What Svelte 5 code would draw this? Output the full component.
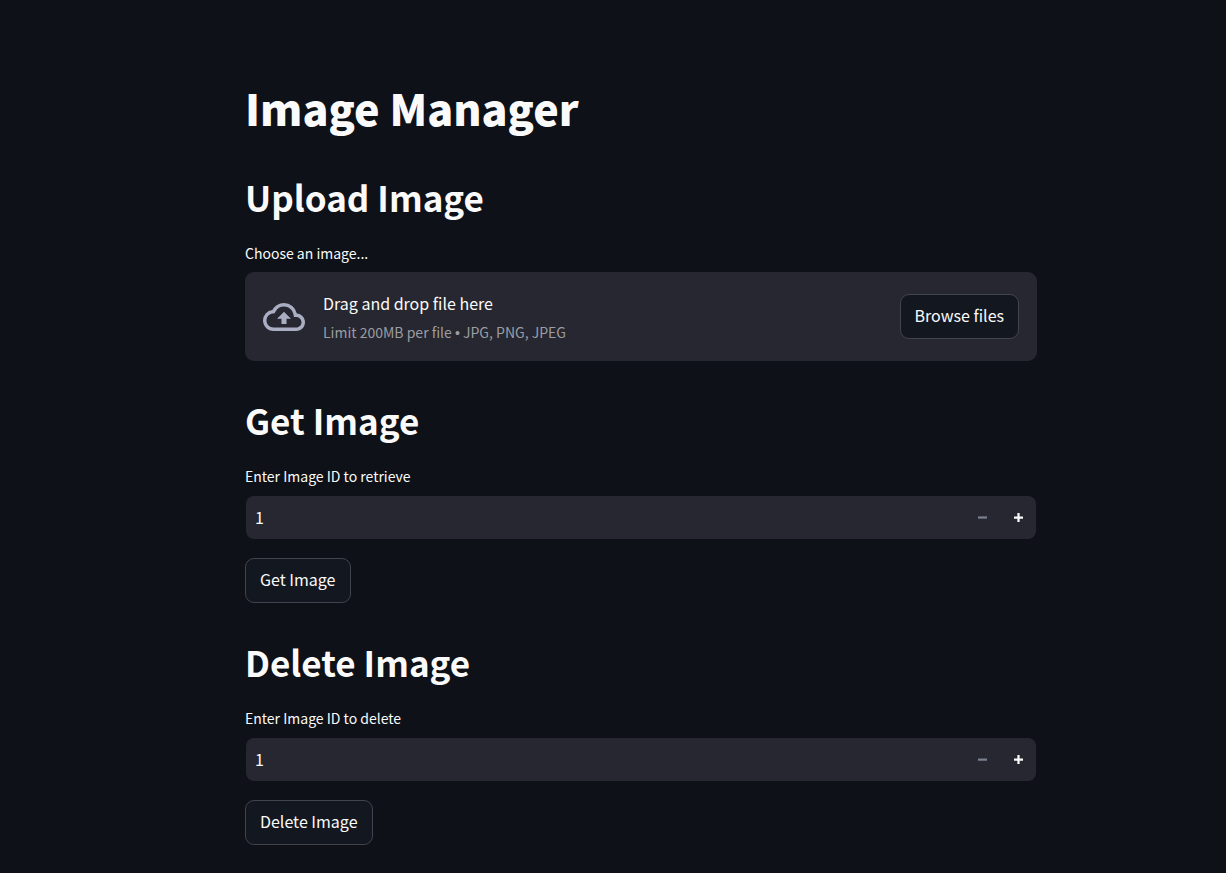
<script>
  let retrieveId = $state(1);
  let deleteId = $state(1);
  let picker;
</script>

{#snippet stepIcons(plus)}
  <svg viewBox="0 0 8 8" aria-hidden="true">
    {#if plus}
      <path d="M3 0v3h-3v2h3v3h2v-3h3v-2h-3v-3h-2z" />
    {:else}
      <path d="M0 3v2h8v-2h-8z" />
    {/if}
  </svg>
{/snippet}

<main>
  <h1>Image Manager</h1>

  <section>
    <h2>Upload Image</h2>
    <label class="caption" for="upload">Choose an image...</label>
    <div class="dropzone">
      <svg class="cloud" viewBox="0 0 24 24" aria-hidden="true">
        <path d="M19.35 10.04A7.49 7.49 0 0012 4C9.11 4 6.6 5.64 5.35 8.04A5.994 5.994 0 000 14c0 3.31 2.69 6 6 6h13c2.76 0 5-2.24 5-5 0-2.64-2.05-4.78-4.65-4.96zM19 18H6c-2.21 0-4-1.79-4-4 0-2.05 1.53-3.76 3.56-3.97l1.07-.11.5-.95A5.469 5.469 0 0112 6c2.62 0 4.88 1.86 5.39 4.43l.3 1.5 1.53.11A2.98 2.98 0 0122 15c0 1.65-1.35 3-3 3zM8 13h2.55v3h2.9v-3H16l-4-4z" />
      </svg>
      <div class="hint">
        <span>Drag and drop file here</span>
        <small>Limit 200MB per file <span class="dot">•</span> JPG, PNG, JPEG</small>
      </div>
      <input id="upload" type="file" accept=".jpg,.png,.jpeg" hidden bind:this={picker} />
      <button class="action" type="button" onclick={() => picker.click()}>Browse files</button>
    </div>
  </section>

  <section>
    <h2>Get Image</h2>
    <label class="caption" for="retrieve">Enter Image ID to retrieve</label>
    <div class="number">
      <input id="retrieve" type="number" min="1" bind:value={retrieveId} />
      <button type="button" aria-label="Decrease" disabled={retrieveId <= 1} onclick={() => retrieveId--}>{@render stepIcons(false)}</button>
      <button type="button" aria-label="Increase" onclick={() => retrieveId++}>{@render stepIcons(true)}</button>
    </div>
    <button class="action" type="button">Get Image</button>
  </section>

  <section>
    <h2>Delete Image</h2>
    <label class="caption" for="delete">Enter Image ID to delete</label>
    <div class="number">
      <input id="delete" type="number" min="1" bind:value={deleteId} />
      <button type="button" aria-label="Decrease" disabled={deleteId <= 1} onclick={() => deleteId--}>{@render stepIcons(false)}</button>
      <button type="button" aria-label="Increase" onclick={() => deleteId++}>{@render stepIcons(true)}</button>
    </div>
    <button class="action" type="button">Delete Image</button>
  </section>
</main>

<style>
  :global(body) {
    background: #0e1117;
    color: #fafafa;
    padding-left: 56px;
    font-family: "Noto Sans CJK SC", "Noto Sans", sans-serif;
    font-size: 16px;
    line-height: 28px;
  }
  main {
    max-width: 792px;
    margin: 0 auto;
    padding: 78px 0 28px;
  }
  h1 {
    margin: 0;
    font-size: 43px;
    line-height: 58px;
    font-weight: 900;
  }
  section {
    padding-top: 35px;
  }
  h1 + section {
    padding-top: 37px;
  }
  h2 {
    margin: 0 0 20px;
    font-size: 35px;
    line-height: 48px;
    font-weight: 700;
  }
  .caption {
    display: block;
    margin-bottom: 7px;
    font-size: 14px;
    line-height: 24px;
  }
  .dropzone {
    display: flex;
    align-items: center;
    gap: 18px;
    padding: 15px 18px;
    border-radius: 9px;
    background: #262730;
  }
  .cloud {
    flex: none;
    width: 42px;
    height: 42px;
    fill: #a9aec2;
  }
  .hint {
    display: flex;
    flex: 1;
    flex-direction: column;
    gap: 1px;
    min-width: 0;
    padding-top: 2px;
  }
  .hint small {
    color: #9c9da2;
    font-size: 14px;
  }
  .dot {
    font-family: "Liberation Sans", sans-serif;
    line-height: 1;
  }
  .action {
    min-height: 45px;
    padding: 6px 14px 9px;
    border: 1px solid #41444c;
    border-radius: 9px;
    background: #131720;
    color: inherit;
    font: inherit;
    cursor: pointer;
  }
  .number {
    display: flex;
    height: 43px;
    margin-bottom: 18px;
    overflow: hidden;
    border: 1px solid transparent;
    border-radius: 9px;
    background: #262730 padding-box;
  }
  .number input {
    flex: 1;
    min-width: 0;
    padding: 0 9px 2px;
    border: 0;
    outline: 0;
    background: transparent;
    color: inherit;
    font: inherit;
    appearance: textfield;
  }
  .number input::-webkit-inner-spin-button {
    appearance: none;
  }
  .number button {
    display: grid;
    place-items: center;
    width: 36px;
    padding: 0;
    border: 0;
    background: transparent;
    color: #fafafa;
    cursor: pointer;
  }
  .number button:disabled {
    color: #7a7f90;
    cursor: default;
  }
  .number svg {
    width: 9px;
    height: 9px;
    fill: currentColor;
  }
</style>
